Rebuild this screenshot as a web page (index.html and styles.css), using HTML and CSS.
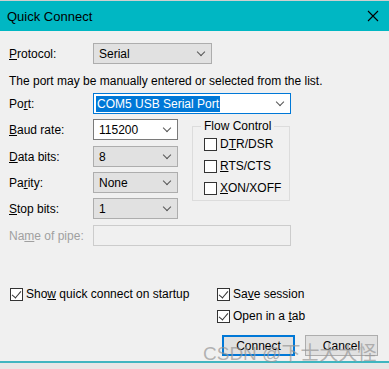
FILE: index.html
```html
<!DOCTYPE html>
<html lang="en">
<head>
    <meta charset="UTF-8">
    <title>Quick Connect</title>
    <link rel="stylesheet" href="styles.css">
</head>
<body>
<div class="dialog">
    <header class="titlebar">
        <span class="title">Quick Connect</span>
        <svg class="close" width="12" height="12" viewBox="0 0 12 12">
            <path d="M1 1L11 11M11 1L1 11" stroke="#000" stroke-width="1.1"/>
        </svg>
    </header>

    <div class="content">
        <div class="row protocol">
            <label><u>P</u>rotocol:</label>
            <div class="combo grey w-serial"><span>Serial</span><i class="arrow"></i></div>
        </div>

        <p class="note">The port may be manually entered or selected from the list.</p>

        <div class="row port">
            <label>Po<u>r</u>t:</label>
            <div class="combo focus w-wide"><span class="sel">COM5 USB Serial Port</span><i class="arrow"></i></div>
        </div>

        <div class="settings">
            <div class="fields">
                <div class="row">
                    <label><u>B</u>aud rate:</label>
                    <div class="combo white w-small"><span>115200</span><i class="arrow"></i></div>
                </div>
                <div class="row">
                    <label><u>D</u>ata bits:</label>
                    <div class="combo grey w-small"><span>8</span><i class="arrow"></i></div>
                </div>
                <div class="row">
                    <label>Pa<u>r</u>ity:</label>
                    <div class="combo grey w-small"><span>None</span><i class="arrow"></i></div>
                </div>
                <div class="row">
                    <label><u>S</u>top bits:</label>
                    <div class="combo grey w-small"><span>1</span><i class="arrow"></i></div>
                </div>
            </div>

            <fieldset class="flow">
                <legend>Flow Control</legend>
                <div class="check"><span class="box"></span><span>D<u>T</u>R/DSR</span></div>
                <div class="check"><span class="box"></span><span><u>R</u>TS/CTS</span></div>
                <div class="check"><span class="box"></span><span><u>X</u>ON/XOFF</span></div>
            </fieldset>
        </div>

        <div class="row pipe">
            <label class="disabled">Na<u>m</u>e of pipe:</label>
            <div class="combo off w-wide"></div>
        </div>

        <div class="options">
            <div class="check"><span class="box on"></span><span>Sho<u>w</u> quick connect on startup</span></div>
            <div class="right-opts">
                <div class="check"><span class="box on"></span><span>Sa<u>v</u>e session</span></div>
                <div class="check"><span class="box on"></span><span>Open in a <u>t</u>ab</span></div>
            </div>
        </div>

        <div class="buttons">
            <button class="primary">Connect</button>
            <button>Cancel</button>
        </div>
    </div>

    <div class="watermark">CSDN @下士大大怪</div>
</div>
<div class="behind"></div>
</body>
</html>
```

FILE: styles.css
```css
html, body {
    margin: 0;
    padding: 0;
}

body {
    width: 389px;
    height: 369px;
    overflow: hidden;
    background: #f0f0f0;
    font-family: "Liberation Sans", "Noto Sans", sans-serif;
    font-size: 12px;
    color: #000;
}

.dialog {
    position: relative;
    height: 361px;
    border-top: 1px solid #cfcfcf;
    box-sizing: border-box;
}

.titlebar {
    height: 30px;
    background: #00b7c3;
    display: flex;
    align-items: center;
    justify-content: space-between;
    padding: 0 10px 0 7px;
}

.title {
    font-size: 13px;
}

.content {
    padding: 12px 0 0 9px;
}

.row {
    display: flex;
    align-items: center;
    height: 21px;
}

.row label {
    width: 84px;
}

.protocol {
    margin-bottom: 6px;
}

.note {
    margin: 0;
    height: 23px;
    line-height: 23px;
}

.port {
    margin-bottom: 5px;
}

.combo {
    height: 21px;
    box-sizing: border-box;
    border: 1px solid #adadad;
    display: flex;
    align-items: center;
    justify-content: space-between;
    padding: 0 7px 0 5px;
}

.grey {
    background: #e1e1e1;
}

.white {
    background: #fff;
    border-color: #7a7a7a;
}

.focus {
    background: #fff;
    border-color: #0078d7;
    padding-left: 2px;
}

.off {
    background: #f0f0f0;
    border-color: #cccccc;
}

.w-serial { width: 119px; }
.w-wide { width: 198px; }
.w-small { width: 85px; }

.sel {
    background: #0078d7;
    color: #fff;
    padding: 1px 1px;
}

.arrow {
    width: 5px;
    height: 5px;
    border-right: 1px solid #555;
    border-bottom: 1px solid #555;
    transform: rotate(45deg);
    margin-top: -4px;
}

.settings {
    display: flex;
}

.fields .row {
    margin-bottom: 5px;
}

.fields .row:first-child {
    margin-bottom: 6px;
}

.flow {
    margin: 0 0 0 14px;
    padding: 0 0 6px 11px;
    width: 98px;
    height: 82px;
    box-sizing: border-box;
    border: 1px solid #dcdcdc;
}

.flow legend {
    padding: 0 3px;
    margin-left: -3px;
}

.check {
    display: flex;
    align-items: center;
    height: 22px;
}

.box {
    width: 13px;
    height: 13px;
    box-sizing: border-box;
    border: 1px solid #333;
    background: #fff;
    margin-right: 3px;
    position: relative;
    flex-shrink: 0;
}

.box.on::after {
    content: "";
    position: absolute;
    left: 3px;
    top: 0px;
    width: 4px;
    height: 8px;
    border-right: 1px solid #333;
    border-bottom: 1px solid #333;
    transform: rotate(40deg);
}

.pipe {
    margin-top: 1px;
}

.disabled {
    color: #a0a0a0;
}

.options {
    display: flex;
    margin-top: 37px;
    padding-left: 1px;
}

.options > .check {
    width: 207px;
}

.buttons {
    display: flex;
    gap: 10px;
    padding-left: 213px;
    margin-top: 8px;
}

.buttons button {
    width: 73px;
    height: 21px;
    box-sizing: border-box;
    font: inherit;
    background: #e1e1e1;
    border: 1px solid #adadad;
    padding: 0;
}

.buttons .primary {
    border: 2px solid #0078d7;
}

.watermark {
    position: absolute;
    left: 203px;
    top: 337px;
    font-size: 19px;
    color: rgba(150, 150, 150, 0.7);
    font-family: "Liberation Sans", "Noto Sans CJK SC", sans-serif;
    white-space: nowrap;
}

.behind {
    height: 8px;
    border-top: 2px solid #3fb5c0;
    background: #e6e6e6;
}
```
